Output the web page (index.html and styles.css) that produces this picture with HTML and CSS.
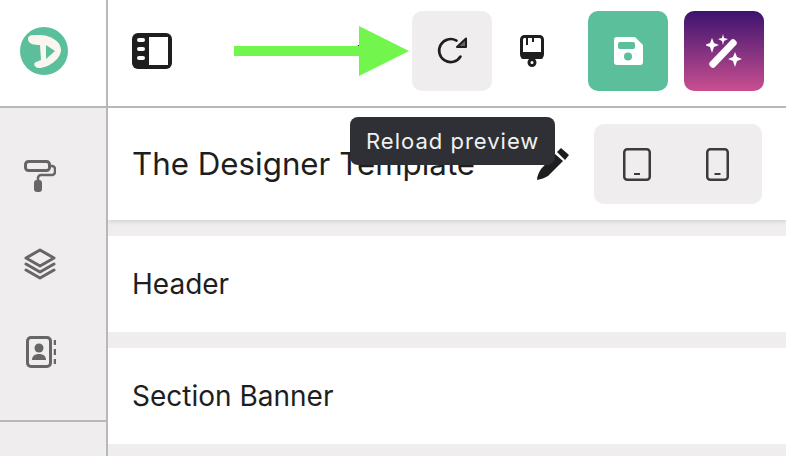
FILE: index.html
```html
<!DOCTYPE html>
<html>

<head>
    <title>The Designer Template</title>
    <link rel="stylesheet" href="styles.css">
</head>

<body>
    <div class="app">
        <div class="logo-cell">
            <svg width="48" height="48" viewBox="0 0 48 48">
                <circle cx="24" cy="24" r="24" fill="#5cbf9b" />
                <path d="M8 12C8 7 14 8 19 8C30 8 41 14 41 23C41 32 28 41 19 41C14 41 13 36 16 35L21 33L20 18C14 18 8 17 8 12z" fill="#fbf5ef" />
                <path d="M26 18L35 24L26 32z" fill="#5cbf9b" />
            </svg>
        </div>
        <header class="topbar">
            <svg width="40" height="36" viewBox="0 0 40 36">
                <rect x="0" y="0" width="40" height="36" rx="6" fill="#1e1e1e" />
                <rect x="17" y="4" width="19" height="28" fill="#fff" />
                <rect x="5" y="5" width="8" height="4" rx="2" fill="#fff" />
                <rect x="5" y="14" width="8" height="4" rx="2" fill="#fff" />
                <rect x="5" y="23" width="8" height="4" rx="2" fill="#fff" />
            </svg>
            <div class="actions">
                <div class="action-pair">
                    <button class="action reload">
                        <svg width="32" height="32" viewBox="0 0 32 32" fill="none">
                            <path d="M24.500 21.500A11.500 11.500 0 1 1 20.500 5.700" stroke="#1e1e1e" stroke-width="2.600" stroke-linecap="round" />
                            <path d="M30 3.500V12H21z" fill="#666" stroke="#1e1e1e" stroke-width="2" stroke-linejoin="round" />
                        </svg>
                    </button>
                    <button class="action">
                        <svg width="24" height="32" viewBox="0 0 24 32" fill="none">
                            <rect x="1.500" y="1.500" width="21" height="21" rx="3" stroke="#1e1e1e" stroke-width="3" />
                            <rect x="1" y="17" width="22" height="7" rx="2" fill="#1e1e1e" />
                            <path d="M7 2v8M13 2v5" stroke="#1e1e1e" stroke-width="2" />
                            <circle cx="12" cy="27.500" r="3" stroke="#1e1e1e" stroke-width="3" />
                        </svg>
                    </button>
                </div>
                <button class="action save">
                    <svg width="29" height="28" viewBox="0 0 29 28">
                        <path d="M3 0h18l8 8v17a3 3 0 0 1-3 3H3a3 3 0 0 1-3-3V3a3 3 0 0 1 3-3z" fill="#fff" />
                        <rect x="4" y="5" width="17" height="7" rx="2" fill="#5cbf9b" />
                        <circle cx="14" cy="19.500" r="4" fill="#5cbf9b" />
                    </svg>
                </button>
                <button class="action magic">
                    <svg width="36" height="34" viewBox="0 0 36 34" fill="#fff">
                        <path d="M25 6a3 3 0 0 1 4 0l1 1a3 3 0 0 1 0 4L9 33a3 3 0 0 1-4 0l-1-1a3 3 0 0 1 0-4z" />
                        <path d="M6 4l2 5 5 2-5 2-2 6-2-6-5-2 5-2z" />
                        <path d="M17 0l1 4 4 1-4 2-1 4-1-4-4-2 4-1z" />
                        <path d="M29 18l2 5 5 2-5 2-2 6-2-6-5-2 5-2z" />
                    </svg>
                </button>
            </div>
        </header>
        <nav class="sidebar">
            <div class="nav-icons">
                <svg width="32" height="32" viewBox="0 0 32 32" fill="none">
                    <rect x="1.500" y="1.500" width="24" height="9" rx="3" stroke="#666" stroke-width="3" />
                    <path d="M26 6h2a3 3 0 0 1 3 3v3a3 3 0 0 1-3 3H17a3 3 0 0 0-3 3v3" stroke="#666" stroke-width="2.500" />
                    <rect x="10" y="20" width="8" height="12" rx="3" fill="#666" />
                </svg>
                <svg width="32" height="32" viewBox="0 0 32 32" fill="none" stroke="#666" stroke-width="3" stroke-linejoin="round" stroke-linecap="round">
                    <path d="M16 2l14 8-14 8-14-8z" />
                    <path d="M2 16l14 8 14-8" />
                    <path d="M2 22l14 8 14-8" />
                </svg>
                <svg class="contact-icon" width="30" height="32" viewBox="0 0 30 32" fill="none">
                    <rect x="1.500" y="1.500" width="23" height="29" rx="3.500" stroke="#666" stroke-width="3" />
                    <circle cx="13" cy="12" r="4.500" fill="#666" />
                    <path d="M6 24c0-4 3-6 7-6s7 2 7 6z" fill="#666" />
                    <path d="M29 4v5M29 13v6M29 23v5" stroke="#666" stroke-width="2.500" />
                </svg>
            </div>
        </nav>
        <main class="content">
            <div class="title-row">
                <h1>The Designer Template</h1>
                <svg class="pencil" width="34" height="34" viewBox="0 0 34 34">
                    <path d="M25 1l8 7-4 5-8-8zM19 7l8 7-15 15c-3 2-7 3-11 4 0-4 2-8 4-11z" fill="#1e1e1e" />
                </svg>
                <div class="devices">
                    <svg width="28" height="33" viewBox="0 0 28 33" fill="none">
                        <rect x="1.250" y="1.250" width="25.500" height="30.500" rx="3" stroke="#3c3c3c" stroke-width="2.500" />
                        <path d="M11 26h6" stroke="#3c3c3c" stroke-width="2" />
                    </svg>
                    <svg width="23" height="33" viewBox="0 0 23 33" fill="none">
                        <rect x="1.250" y="1.250" width="20.500" height="30.500" rx="3" stroke="#3c3c3c" stroke-width="2.500" />
                        <path d="M8.500 26h6" stroke="#3c3c3c" stroke-width="2" />
                    </svg>
                </div>
            </div>
            <div class="section">Header</div>
            <div class="section">Section Banner</div>
        </main>
    </div>

    <div class="behind-arrow"></div>
    <div class="arrow"></div>
    <div class="tooltip">Reload preview</div>
</body>

</html>
```

FILE: styles.css
```css
body {
    margin: 0;
    width: 786px;
    height: 456px;
    overflow: hidden;
    background: #fff;
    font-family: Inter, "Noto Sans", sans-serif;
    color: #1e1e1e;
}

.app {
    display: grid;
    grid-template-columns: 108px 1fr;
    grid-template-rows: 108px 1fr;
    height: 456px;
}

.logo-cell {
    display: flex;
    align-items: center;
    padding: 0 0 4px 20px;
    border-right: 2px solid #b8b8b8;
    border-bottom: 2px solid #b8b8b8;
}

.topbar {
    display: flex;
    align-items: center;
    justify-content: space-between;
    padding: 0 22px 4px 24px;
    border-bottom: 2px solid #b8b8b8;
}

.actions {
    display: flex;
    gap: 16px;
}

.action-pair {
    display: flex;
}

.action {
    display: flex;
    align-items: center;
    justify-content: center;
    width: 80px;
    height: 80px;
    padding: 0;
    border: none;
    border-radius: 10px;
    background: none;
}

.reload {
    background: #efedee;
}

.save {
    background: #5cbf9b;
}

.magic {
    background: linear-gradient(#3c136f, #c94f90);
}

.sidebar {
    background: #efedee;
    border-right: 2px solid #b8b8b8;
}

.nav-icons {
    display: flex;
    flex-direction: column;
    gap: 56px;
    height: 314px;
    box-sizing: border-box;
    padding: 52px 0 0 24px;
    border-bottom: 2px solid #b8b8b8;
}

.contact-icon {
    margin-left: 2px;
}

.content {
    background: #efedee;
    overflow: hidden;
}

.title-row {
    display: flex;
    align-items: center;
    height: 112px;
    padding: 0 24px;
    background: #fff;
    box-shadow: 0 1px 5px rgba(0, 0, 0, 0.15);
}

h1 {
    margin: 0;
    font-size: 31.3px;
    font-weight: 400;
}

.pencil {
    margin-left: auto;
}

.devices {
    display: flex;
    align-items: center;
    justify-content: space-between;
    box-sizing: border-box;
    width: 168px;
    height: 80px;
    margin-left: 24px;
    padding: 0 33px 0 29px;
    border-radius: 10px;
    background: #efedee;
}

.section {
    display: flex;
    align-items: center;
    height: 96px;
    margin-top: 16px;
    padding-left: 24px;
    background: #fff;
    font-size: 28px;
}

.behind-arrow {
    position: absolute;
    left: 356px;
    top: 43px;
    width: 16px;
    height: 15px;
    border-radius: 50%;
    background: #1e1e1e;
}

.arrow {
    position: absolute;
    left: 234px;
    top: 26px;
    width: 175px;
    height: 50px;
    background: #72f54d;
    clip-path: polygon(0 20px, 125px 20px, 125px 0, 175px 25px, 125px 50px, 125px 30px, 0 30px);
}

.tooltip {
    position: absolute;
    left: 350px;
    top: 117px;
    display: flex;
    align-items: center;
    height: 48px;
    padding: 0 16px;
    border-radius: 8px;
    background: #2f3035;
    color: #f1f1f1;
    font-size: 22px;
    letter-spacing: 1px;
}
```
